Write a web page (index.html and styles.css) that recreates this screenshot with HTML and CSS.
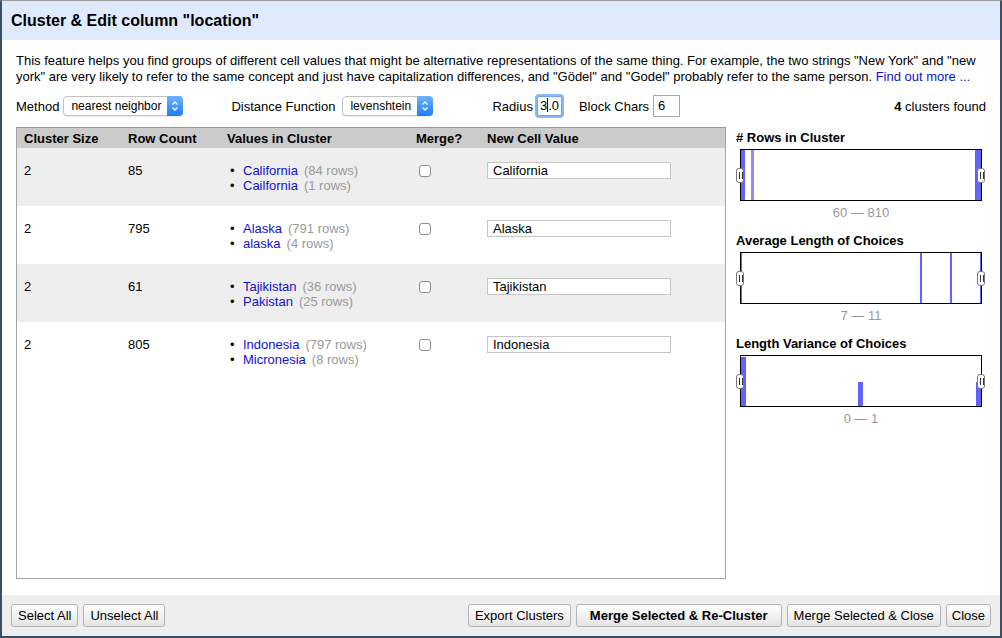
FILE: index.html
```html
<!DOCTYPE html>
<html>
<head>
<meta charset="utf-8">
<link rel="stylesheet" href="styles.css">
</head>
<body>
<div class="dialog">
  <div class="dialog-header">Cluster &amp; Edit column "location"</div>
  <div class="dialog-body">
    <p class="desc">This feature helps you find groups of different cell values that might be alternative representations of the same thing. For example, the two strings "New York" and "new york" are very likely to refer to the same concept and just have capitalization differences, and "Gödel" and "Godel" probably refer to the same person. <a class="link" href="#">Find out more ...</a></p>
    <div class="controls">
      <span class="label">Method</span>
      <span class="select sel-method">nearest neighbor<span class="sel-btn"><svg width="8" height="12" viewBox="0 0 8 12"><path d="M1.5 4.5 L4 2 L6.5 4.5 M1.5 7.5 L4 10 L6.5 7.5" fill="none" stroke="#fff" stroke-width="1.3"/></svg></span></span>
      <span class="label lbl-dist">Distance Function</span>
      <span class="select sel-dist">levenshtein<span class="sel-btn"><svg width="8" height="12" viewBox="0 0 8 12"><path d="M1.5 4.5 L4 2 L6.5 4.5 M1.5 7.5 L4 10 L6.5 7.5" fill="none" stroke="#fff" stroke-width="1.3"/></svg></span></span>
      <span class="label lbl-radius">Radius</span>
      <span class="textbox focused">3<span class="caret"></span>.0</span>
      <span class="label lbl-block">Block Chars</span>
      <span class="textbox">6</span>
      <span class="found"><b>4</b> clusters found</span>
    </div>
    <div class="main">
      <div class="table-panel">
        <table class="clusters">
          <thead>
            <tr><th class="c1">Cluster Size</th><th class="c2">Row Count</th><th class="c3">Values in Cluster</th><th class="c4">Merge?</th><th class="c5">New Cell Value</th></tr>
          </thead>
          <tbody>
            <tr class="odd">
              <td>2</td><td>85</td>
              <td><ul class="values"><li><a href="#">California</a><span class="cnt">(84 rows)</span></li><li><a href="#">Cailfornia</a><span class="cnt">(1 rows)</span></li></ul></td>
              <td><span class="check"></span></td>
              <td><span class="cellinput">California</span></td>
            </tr>
            <tr>
              <td>2</td><td>795</td>
              <td><ul class="values"><li><a href="#">Alaska</a><span class="cnt">(791 rows)</span></li><li><a href="#">alaska</a><span class="cnt">(4 rows)</span></li></ul></td>
              <td><span class="check"></span></td>
              <td><span class="cellinput">Alaska</span></td>
            </tr>
            <tr class="odd">
              <td>2</td><td>61</td>
              <td><ul class="values"><li><a href="#">Tajikistan</a><span class="cnt">(36 rows)</span></li><li><a href="#">Pakistan</a><span class="cnt">(25 rows)</span></li></ul></td>
              <td><span class="check"></span></td>
              <td><span class="cellinput">Tajikistan</span></td>
            </tr>
            <tr>
              <td>2</td><td>805</td>
              <td><ul class="values"><li><a href="#">Indonesia</a><span class="cnt">(797 rows)</span></li><li><a href="#">Micronesia</a><span class="cnt">(8 rows)</span></li></ul></td>
              <td><span class="check"></span></td>
              <td><span class="cellinput">Indonesia</span></td>
            </tr>
          </tbody>
        </table>
      </div>
      <div class="facets">
        <div class="facet">
          <div class="facet-title"># Rows in Cluster</div>
          <div class="hist">
            <svg width="240" height="50" viewBox="0 0 240 50"><rect x="0" y="0" width="4" height="50" fill="#6262ff"/><rect x="10" y="0" width="3" height="50" fill="#8c8cff"/><rect x="234" y="0" width="6" height="50" fill="#6262ff"/></svg>
            <span class="handle hl"></span><span class="handle hr"></span>
          </div>
          <div class="range">60 — 810</div>
        </div>
        <div class="facet">
          <div class="facet-title">Average Length of Choices</div>
          <div class="hist">
            <svg width="240" height="50" viewBox="0 0 240 50"><rect x="0" y="0" width="1" height="50" fill="#6262ff"/><rect x="179" y="0" width="2" height="50" fill="#6262ff"/><rect x="209" y="0" width="2" height="50" fill="#6262ff"/><rect x="239" y="0" width="1" height="50" fill="#6262ff"/></svg>
            <span class="handle hl"></span><span class="handle hr"></span>
          </div>
          <div class="range">7 — 11</div>
        </div>
        <div class="facet">
          <div class="facet-title">Length Variance of Choices</div>
          <div class="hist">
            <svg width="240" height="50" viewBox="0 0 240 50"><rect x="0" y="1" width="5" height="49" fill="#6262ff"/><rect x="117" y="26" width="5" height="24" fill="#6262ff"/><rect x="235" y="26" width="5" height="24" fill="#6262ff"/></svg>
            <span class="handle hl"></span><span class="handle hr"></span>
          </div>
          <div class="range">0 — 1</div>
        </div>
      </div>
    </div>
  </div>
  <div class="dialog-footer">
    <div class="btn-group">
      <button class="btn">Select All</button>
      <button class="btn">Unselect All</button>
    </div>
    <div class="btn-group">
      <button class="btn">Export Clusters</button>
      <button class="btn primary">Merge Selected &amp; Re-Cluster</button>
      <button class="btn">Merge Selected &amp; Close</button>
      <button class="btn btn-close">Close</button>
    </div>
  </div>
</div>
</body>
</html>
```

FILE: styles.css
```css
* { box-sizing: border-box; }
html, body { margin: 0; padding: 0; }
body {
  font-family: "Liberation Sans", Arial, sans-serif;
  font-size: 13px;
  color: #000;
  background: #fff;
}
.dialog {
  width: 1002px;
  height: 638px;
  border: 2px solid #3c4d64;
  border-top: 1px solid #9a9a9a;
  display: flex;
  flex-direction: column;
  background: #fff;
}
.dialog-header {
  height: 39px;
  background: #dfeafc;
  font-weight: bold;
  font-size: 16px;
  line-height: 39px;
  padding-left: 9px;
  flex: none;
}
.dialog-body {
  flex: 1;
  padding: 13px 13px 0 14px;
  display: flex;
  flex-direction: column;
}
.desc {
  margin: 0;
  line-height: 16px;
  width: 972px;
}
.link, .values a { color: #1111cc; text-decoration: none; }
.controls {
  display: flex;
  align-items: center;
  height: 22px;
  margin-top: 10px;
}
.label { margin-right: 4px; }
.lbl-dist { margin-left: 48px; margin-right: 7px; }
.lbl-radius { margin-left: 59px; margin-right: 4px; }
.lbl-block { margin-left: 17px; margin-right: 4px; }
.select {
  position: relative;
  display: inline-block;
  height: 20px;
  line-height: 18px;
  font-size: 12px;
  border: 1px solid #c2c2c2;
  border-radius: 4px;
  padding-left: 7px;
  background: #fff;
  box-shadow: 0 1px 1px rgba(0,0,0,0.08);
}
.sel-method { width: 120px; }
.sel-dist { width: 91px; }
.sel-btn {
  position: absolute;
  right: -1px;
  top: -1px;
  width: 16px;
  height: 20px;
  border-radius: 0 4px 4px 0;
  background: linear-gradient(#6cb4fb, #1b7ff8);
  display: flex;
  align-items: center;
  justify-content: center;
}
.textbox {
  display: inline-block;
  width: 27px;
  height: 22px;
  line-height: 20px;
  border: 1px solid #a9a9a9;
  padding-left: 4px;
  font-size: 13px;
  background: #fff;
}
.textbox.focused {
  width: 25px;
  height: 20px;
  line-height: 18px;
  border: 1px solid #6fa5e6;
  border-radius: 2px;
  box-shadow: 0 0 0 2px #8ab8f5;
  padding-left: 2px;
}
.caret {
  display: inline-block;
  width: 1px;
  height: 14px;
  background: #000;
  vertical-align: -2px;
}
.found { margin-left: auto; margin-right: 1px; }
.main {
  display: flex;
  margin-top: 10px;
  height: 452px;
}
.table-panel {
  width: 710px;
  height: 452px;
  border: 1px solid #a3a3a3;
  border-top-color: #999;
  overflow: hidden;
  flex: none;
}
.clusters {
  width: 100%;
  border-collapse: collapse;
  table-layout: fixed;
}
.clusters th {
  background: #cbcbcb;
  font-weight: bold;
  text-align: left;
  height: 20px;
  line-height: 16px;
  padding: 3px 7px 1px;
}
.c1 { width: 104px; }
.c2 { width: 99px; }
.c3 { width: 189px; }
.c4 { width: 71px; }
.clusters td {
  vertical-align: top;
  height: 58px;
  padding: 15px 7px 0;
  line-height: 15px;
}
.clusters tr.odd td { background: #eeeeee; }
.values { list-style: none; margin: 0; padding: 0; }
.values li::before {
  content: "•";
  display: inline-block;
  width: 13px;
  margin-left: 3px;
}
.cnt { color: #999; margin-left: 6px; }
.check {
  display: block;
  width: 12px;
  height: 12px;
  margin: 2px 0 0 3px;
  border: 1px solid #8e8e8e;
  border-radius: 3px;
  background: #fff;
}
.cellinput {
  display: block;
  width: 184px;
  height: 17px;
  line-height: 15px;
  margin-top: -1px;
  border: 1px solid #c6c6c6;
  padding-left: 5px;
  background: #fff;
}
.facets {
  margin-left: 10px;
  width: 250px;
}
.facet { margin-bottom: 12px; }
.facet-title {
  font-weight: bold;
  line-height: 16px;
}
.facet:first-child .facet-title { margin-top: 3px; }
.hist {
  position: relative;
  margin: 3px 0 0 4px;
  width: 242px;
  height: 52px;
  border: 1px solid #000;
  background: #fff;
}
.hist svg { display: block; }
.handle {
  position: absolute;
  top: 18px;
  width: 8px;
  height: 15px;
  background: #fff;
  border: 1px solid #777;
  border-radius: 3px;
}
.handle::before {
  content: "";
  position: absolute;
  left: 2px;
  top: 3px;
  width: 2px;
  height: 7px;
  border-left: 1px solid #333;
  border-right: 1px solid #333;
}
.hl { left: -5px; }
.hr { left: 236px; }
.range {
  width: 242px;
  margin-left: 4px;
  margin-top: 4px;
  text-align: center;
  color: #999999;
  line-height: 16px;
}
.dialog-footer {
  flex: none;
  height: 41px;
  background: #eeeeee;
  display: flex;
  justify-content: space-between;
  padding: 9px 9px 0 9px;
}
.btn-group { display: flex; gap: 5px; align-items: flex-start; }
.btn {
  font-family: "Liberation Sans", Arial, sans-serif;
  font-size: 13px;
  height: 23px;
  padding: 0 6px;
  border: 1px solid #b4b4b4;
  border-radius: 3px;
  background: linear-gradient(#ffffff, #e4e4e4);
  color: #000;
}
.btn.primary { font-weight: bold; padding: 0 13px; }
.btn.btn-close { padding: 0 5px; }
```
